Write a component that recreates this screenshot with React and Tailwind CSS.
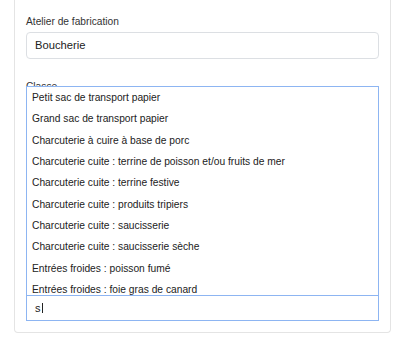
const classes = [
  "Petit sac de transport papier",
  "Grand sac de transport papier",
  "Charcuterie à cuire à base de porc",
  "Charcuterie cuite : terrine de poisson et/ou fruits de mer",
  "Charcuterie cuite : terrine festive",
  "Charcuterie cuite : produits tripiers",
  "Charcuterie cuite : saucisserie",
  "Charcuterie cuite : saucisserie sèche",
  "Entrées froides : poisson fumé",
  "Entrées froides : foie gras de canard",
];

export default function App() {
  return (
    <div className="h-[345px] w-[400px] overflow-hidden bg-white font-['Liberation_Sans',Arial,sans-serif] text-[#212529]">
      <div className="ml-[14px] w-[377px] rounded-b-[4px] border-x border-b border-[#e4e4e4] px-[11px] pt-[14px] pb-[11px]">
        {/* Atelier */}
        <label className="block text-[10.2px] leading-[15px] text-[#333]">
          Atelier de fabrication
        </label>
        <div className="mt-[3px] flex h-[27px] items-center rounded-[4px] border border-[#dcdfe3] px-[8px] text-[11.2px] text-[#222]">
          Boucherie
        </div>

        {/* Classe, with its open dropdown over the label */}
        <label className="mt-[20px] block text-[10.2px] leading-[15px] text-[#333]">
          Classe
        </label>
        <div className="relative -mt-[8px] border border-[#8db5f2] bg-white">
          <ul className="h-[208px] overflow-hidden">
            {classes.map((c) => (
              <li
                key={c}
                className="flex h-[21.33px] items-center whitespace-nowrap px-[5px] text-[10.25px] text-[#222]"
              >
                {c}
              </li>
            ))}
          </ul>
          <div className="flex h-[25px] items-center border-t border-[#8db5f2] px-[8px] text-[11px] text-[#222]">
            <span className="inline-block border-r border-[#222] pr-px leading-[10px]">s</span>
          </div>
        </div>
      </div>
    </div>
  );
}
